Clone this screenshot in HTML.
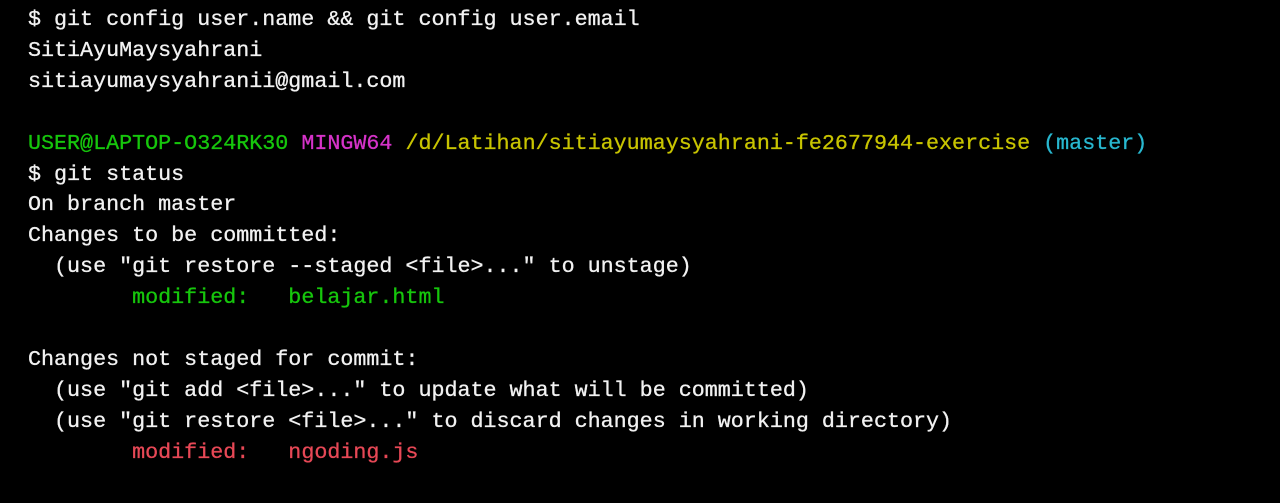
<html><head><style>
body{margin:0;background:#000;width:1280px;height:503px;overflow:hidden}
pre{margin:0;position:absolute;left:28px;top:5px;font-family:"Liberation Mono",monospace;font-size:21.7px;line-height:30.9px;color:#f2f2f2;-webkit-text-stroke:0.3px currentColor}
.g{color:#16c60c}.m{color:#d633c9}.y{color:#c8c400}.c{color:#28b8d0}.r{color:#e74856}
</style></head><body><pre>$ git config user.name &amp;&amp; git config user.email
SitiAyuMaysyahrani
sitiayumaysyahranii@gmail.com

<span class="g">USER@LAPTOP-O324RK30</span> <span class="m">MINGW64</span> <span class="y">/d/Latihan/sitiayumaysyahrani-fe2677944-exercise</span> <span class="c">(master)</span>
$ git status
On branch master
Changes to be committed:
  (use "git restore --staged &lt;file&gt;..." to unstage)
        <span class="g">modified:   belajar.html</span>

Changes not staged for commit:
  (use "git add &lt;file&gt;..." to update what will be committed)
  (use "git restore &lt;file&gt;..." to discard changes in working directory)
        <span class="r">modified:   ngoding.js</span>
</pre></body></html>
